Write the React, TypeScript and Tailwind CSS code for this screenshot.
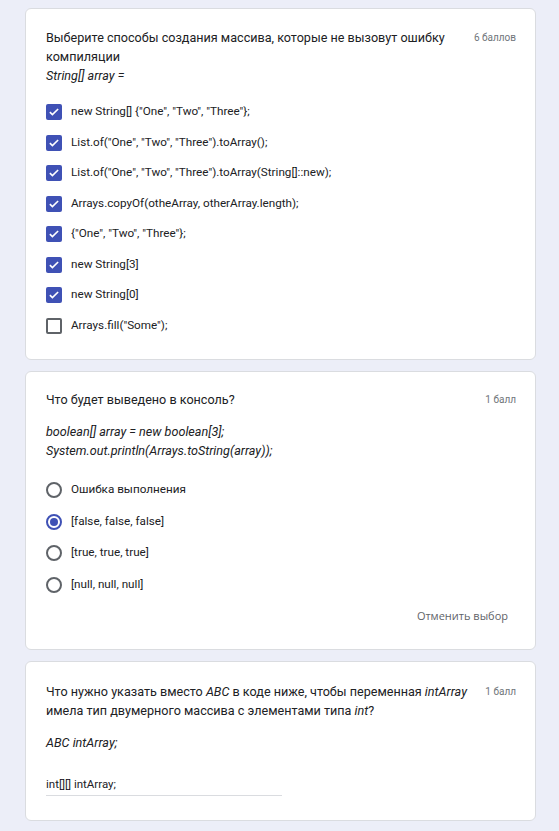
import React from 'react';

const checks = [
  { label: 'new String[] {"One", "Two", "Three"};', on: true },
  { label: 'List.of("One", "Two", "Three").toArray();', on: true },
  { label: 'List.of("One", "Two", "Three").toArray(String[]::new);', on: true },
  { label: 'Arrays.copyOf(otheArray, otherArray.length);', on: true },
  { label: '{"One", "Two", "Three"};', on: true },
  { label: 'new String[3]', on: true },
  { label: 'new String[0]', on: true },
  { label: 'Arrays.fill("Some");', on: false },
];

const radios = [
  { label: 'Ошибка выполнения', on: false },
  { label: '[false, false, false]', on: true },
  { label: '[true, true, true]', on: false },
  { label: '[null, null, null]', on: false },
];

function Checkbox({ on }: { on: boolean }) {
  if (!on) {
    return <span className="w-4 h-4 rounded-[2px] border-2 border-[#5f6368] bg-white shrink-0" />;
  }
  return (
    <span className="w-4 h-4 rounded-[2px] bg-[#3f51b5] flex items-center justify-center shrink-0">
      <svg viewBox="0 0 16 16" className="w-3 h-3">
        <path d="M2.5 8.2l3.4 3.3L13.5 4" fill="none" stroke="white" strokeWidth="2.2" />
      </svg>
    </span>
  );
}

function Radio({ on }: { on: boolean }) {
  return (
    <span
      className={
        on
          ? 'w-4 h-4 rounded-full border-2 border-[#3f51b5] flex items-center justify-center shrink-0'
          : 'w-4 h-4 rounded-full border-2 border-[#5f6368] shrink-0'
      }
    >
      {on && <span className="w-2 h-2 rounded-full bg-[#3f51b5]" />}
    </span>
  );
}

function Points({ children }: { children: React.ReactNode }) {
  return <span className="text-[10px] text-[#70757a] whitespace-nowrap pt-[2px] pl-2">{children}</span>;
}

export default function App() {
  return (
    <div className="min-h-[831px] bg-[#eceef8] pl-[25px] pr-[23px] pt-2 pb-2 flex flex-col gap-[11px] font-['Roboto',sans-serif] text-[#202124]">
      <div className="bg-white border border-[#dadce0] rounded-md pl-5 pr-[19px] pt-[19px] pb-[18px]">
        <div className="flex justify-between items-start">
          <div className="text-[12.6px] leading-[19px]">
            Выберите способы создания массива, которые не вызовут ошибку компиляции
            <br />
            <i>String[] array =</i>
          </div>
          <Points>6 баллов</Points>
        </div>
        <div className="mt-[12px] flex flex-col">
          {checks.map((c) => (
            <div key={c.label} className="h-[30.5px] flex items-center gap-[9px] text-[11.7px]">
              <Checkbox on={c.on} />
              <span>{c.label}</span>
            </div>
          ))}
        </div>
      </div>

      <div className="bg-white border border-[#dadce0] rounded-md pl-5 pr-[19px] pt-[18px] pb-[21px]">
        <div className="flex justify-between items-start">
          <div className="text-[12.6px] leading-[19px]">Что будет выведено в консоль?</div>
          <Points>1 балл</Points>
        </div>
        <div className="mt-[13px] text-[12.6px] leading-[19px] italic">
          boolean[] array = new boolean[3];
          <br />
          System.out.println(Arrays.toString(array));
        </div>
        <div className="mt-[14px] flex flex-col">
          {radios.map((r) => (
            <div key={r.label} className="h-[31.7px] flex items-center gap-[9px] text-[11.7px]">
              <Radio on={r.on} />
              <span>{r.label}</span>
            </div>
          ))}
        </div>
        <div className="flex justify-end mt-[3px] pr-2">
          <span className="text-[11px] font-medium text-[#5f6368] font-['Open_Sans',sans-serif] leading-[24px]">
            Отменить выбор
          </span>
        </div>
      </div>

      <div className="bg-white border border-[#dadce0] rounded-md pl-5 pr-[19px] pt-[20px] pb-[24px]">
        <div className="flex justify-between items-start">
          <div className="text-[12.6px] leading-[19px]">
            Что нужно указать вместо <i>ABC</i> в коде ниже, чтобы переменная <i>intArray</i> имела тип двумерного
            массива с элементами типа <i>int</i>?
          </div>
          <Points>1 балл</Points>
        </div>
        <div className="mt-[13px] text-[12.6px] leading-[19px] italic">ABC intArray;</div>
        <div className="mt-[24px] w-[236px] border-b border-[#dadce0] text-[11.5px] leading-[16px] pb-[3px]">
          int[][] intArray;
        </div>
      </div>
    </div>
  );
}
